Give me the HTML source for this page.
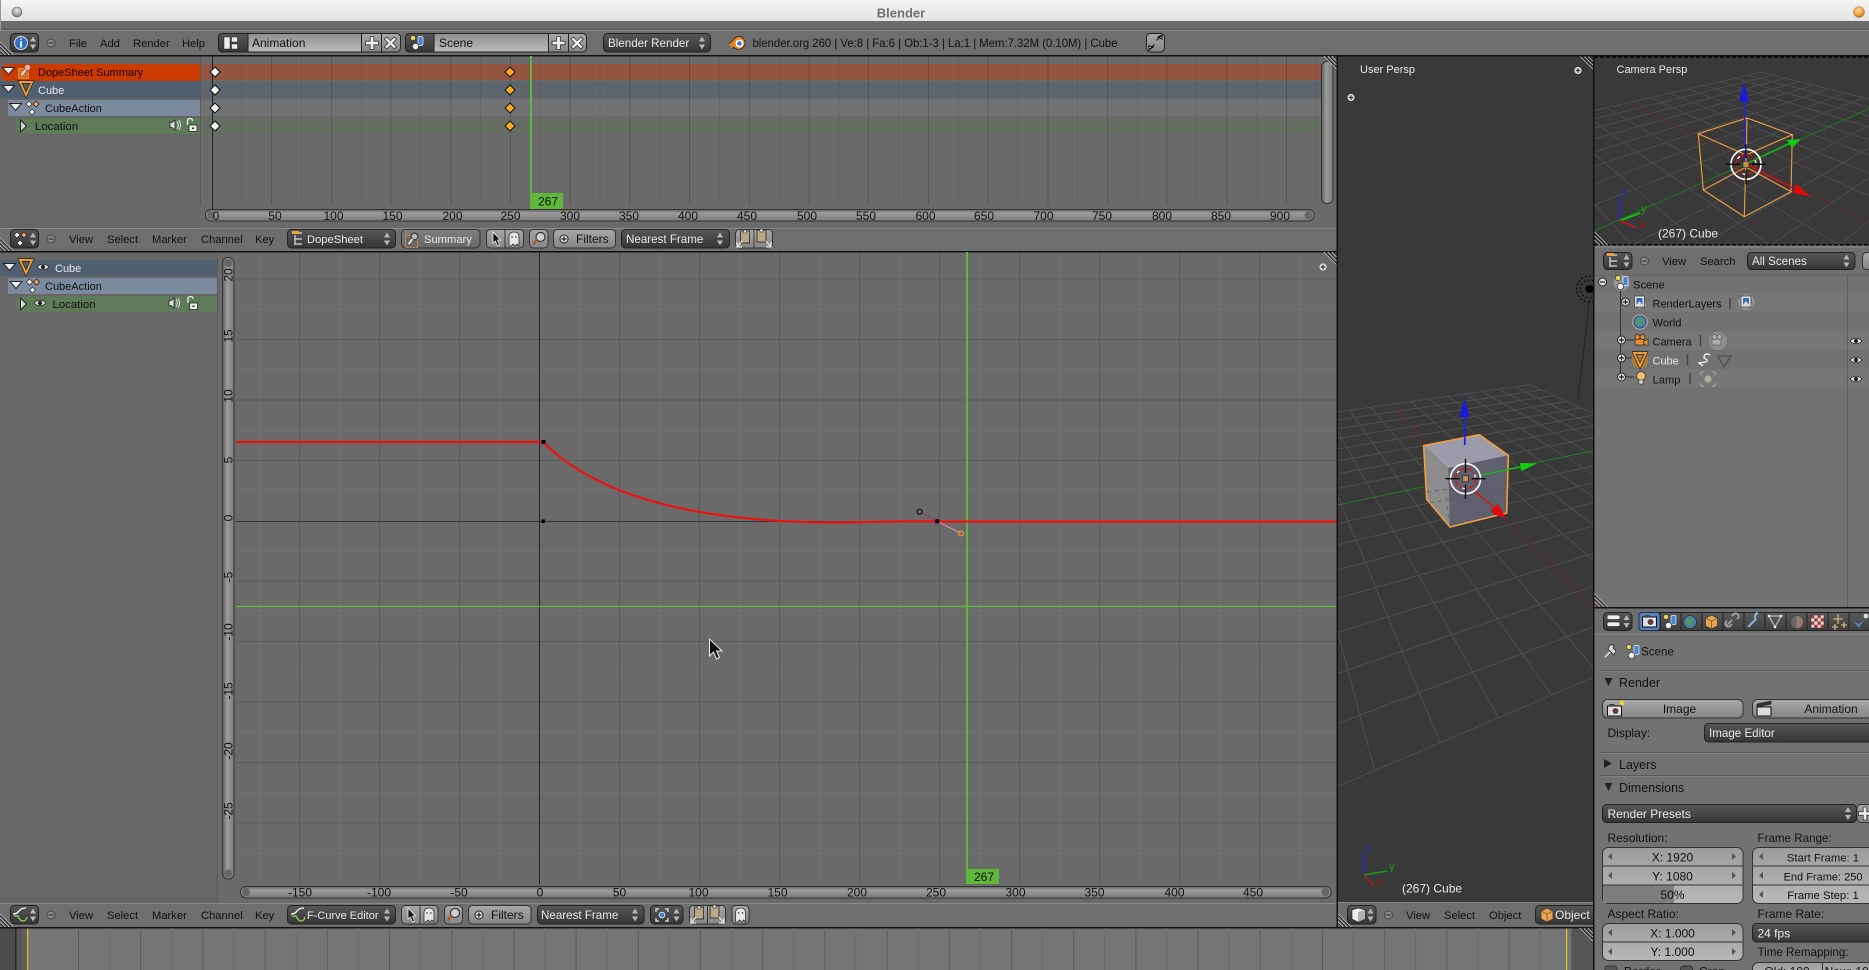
<!DOCTYPE html>
<html><head><meta charset="utf-8"><title>Blender</title>
<style>
html,body{margin:0;padding:0;background:#727272;width:1869px;height:970px;overflow:hidden}
svg{display:block}
text{font-family:"Liberation Sans",sans-serif;font-size:12px;fill:#111}
.w{fill:#e8e8e8}
.m{text-anchor:middle}
.h{font-size:11.2px}
.n{font-size:11.6px}
.c{shape-rendering:crispEdges}
</style></head><body>
<svg width="1869" height="970" viewBox="0 0 1869 970" xmlns="http://www.w3.org/2000/svg">
<defs>
<linearGradient id="gt" x1="0" y1="0" x2="0" y2="1"><stop offset="0" stop-color="#f4f4f3"/><stop offset="1" stop-color="#e3e3e3"/></linearGradient>
<linearGradient id="gd" x1="0" y1="0" x2="0" y2="1"><stop offset="0" stop-color="#575757"/><stop offset="1" stop-color="#353535"/></linearGradient>
<linearGradient id="gb" x1="0" y1="0" x2="0" y2="1"><stop offset="0" stop-color="#a8a8a8"/><stop offset="1" stop-color="#858585"/></linearGradient>
<linearGradient id="gsm" x1="0" y1="0" x2="0" y2="1"><stop offset="0" stop-color="#808080"/><stop offset="1" stop-color="#666"/></linearGradient>
<linearGradient id="gf" x1="0" y1="0" x2="0" y2="1"><stop offset="0" stop-color="#8f8f8f"/><stop offset="1" stop-color="#bcbcbc"/></linearGradient>
<linearGradient id="gn" x1="0" y1="0" x2="0" y2="1"><stop offset="0" stop-color="#9c9c9c"/><stop offset="1" stop-color="#b8b8b8"/></linearGradient>
<linearGradient id="gs" x1="0" y1="0" x2="0" y2="1"><stop offset="0" stop-color="#5e5e5e"/><stop offset=".3" stop-color="#9c9c9c"/><stop offset="1" stop-color="#7a7a7a"/></linearGradient>
<linearGradient id="gv" x1="0" y1="0" x2="1" y2="0"><stop offset="0" stop-color="#5e5e5e"/><stop offset=".4" stop-color="#9c9c9c"/><stop offset="1" stop-color="#7a7a7a"/></linearGradient>
<linearGradient id="gtab" x1="0" y1="0" x2="0" y2="1"><stop offset="0" stop-color="#5a5a5a"/><stop offset="1" stop-color="#3e3e3e"/></linearGradient>
<radialGradient id="gor" cx=".45" cy=".35" r=".7"><stop offset="0" stop-color="#fde0a0"/><stop offset=".6" stop-color="#f0a030"/><stop offset="1" stop-color="#a86010"/></radialGradient>
<radialGradient id="ggr" cx=".5" cy=".35" r=".7"><stop offset="0" stop-color="#e8e8e8"/><stop offset=".7" stop-color="#999"/><stop offset="1" stop-color="#555"/></radialGradient>
<pattern id="ptl" patternUnits="userSpaceOnUse" x="78" y="928" width="62.2" height="42"><rect x="0" width="1" height="42" fill="#5c5c5c"/><rect x="31" width="1" height="42" fill="#6a6a6a"/></pattern>

<g id="ud"><path d="M0-6.5L-3-1.5H3zM0 6.5L-3 1.5H3z" fill="#b8b8b8"/></g>
<g id="plus"><path d="M-1.8-6.5h3.6v4.7h4.7v3.6h-4.7v4.7h-3.6v-4.7h-4.7v-3.6h4.7z" fill="#eee" stroke="#333" stroke-width=".8"/></g>
<g id="xx"><g transform="rotate(45)"><path d="M-1.6-7h3.2v5.4h5.4v3.2h-5.4v5.4h-3.2v-5.4h-5.4v-3.2h5.4z" fill="#eee" stroke="#333" stroke-width=".8"/></g></g>
<g id="dw"><path d="M-6.5-3.5H5.5L-.5 3.5z" fill="#eee" stroke="#222"/></g>
<g id="rt"><path d="M-2.5-6V6L3.5 0z" fill="#d8d8d8" stroke="#222"/></g>
<g id="dmw"><path d="M0-5L5 0 0 5-5 0z" fill="#f2f2f2" stroke="#111"/></g>
<g id="dmo"><path d="M0-5L5 0 0 5-5 0z" fill="#f8ac20" stroke="#111"/></g>
<g id="act"><path d="M-6-6L-3-9 0-6-3-3zM1-6L4-9 7-6 4-3zM-3 2L0-1 3 2 0 5z" fill="#f2f2f2" stroke="#222" stroke-width=".7"/><path d="M1-6L4-9 7-6 4-3z" fill="#f0a060" stroke="#222" stroke-width=".7"/></g>
<g id="mesh"><path d="M-6-7H6L0 6z" fill="none" stroke="#222" stroke-width="3.4"/><path d="M-6-7H6L0 6z" fill="none" stroke="#f09a30" stroke-width="2"/></g>
<g id="eye"><path d="M-6 0Q0-5.5 6 0Q0 5.5-6 0z" fill="#eee" stroke="#222" stroke-width=".8"/><circle r="2.2" fill="#222"/></g>
<g id="spk"><path d="M-5-2.500h2L0-5V5L-3 2.500h-2z" fill="#ddd" stroke="#222" stroke-width=".8"/><path d="M2-4Q4.500 0 2 4M4-5Q7 0 4 5" fill="none" stroke="#ddd"/></g>
<g id="lock"><path d="M-5-1V-5Q-5-7.500-2.500-7.500T0-5" fill="none" stroke="#eee" stroke-width="1.300"/><rect x="-3.500" y="-1" width="8" height="6.500" fill="#eee" stroke="#222" stroke-width=".8"/><rect x="-.5" y="1.500" width="2" height="1.500" fill="#222"/></g>
<g id="minus"><circle r="4" fill="#8a8a8a" stroke="#444"/><path d="M-2.300 0H2.300" stroke="#333" stroke-width="1.200"/></g>
<g id="cplus"><circle r="4" fill="#ddd" stroke="#222"/><path d="M-2.500 0H2.500M0-2.500V2.500" stroke="#222" stroke-width="1.200"/></g>
<g id="cminus"><circle r="4" fill="#ddd" stroke="#222"/><path d="M-2.500 0H2.500" stroke="#222" stroke-width="1.200"/></g>
<g id="wplus"><circle r="3.600" fill="#ddd"/><path d="M-2.200 0H2.200M0-2.200V2.200" stroke="#333" stroke-width="1.200"/></g>
<g id="scene"><circle cx="-5" cy="-5" r="2.600" fill="#e8d858" stroke="#222" stroke-width=".6"/><rect x="0" y="-6.500" width="5" height="9" rx="1.500" fill="#4a84d8" stroke="#eee" stroke-width=".7"/><circle cx="-2.500" cy="3.500" r="3.200" fill="#eee" stroke="#222" stroke-width=".7"/></g>
<g id="sumi"><rect x="-6.500" y="-2.500" width="10" height="10" fill="#c87038" stroke="#f09a30" stroke-dasharray="2 1"/><circle cx="2.500" cy="-3.500" r="3.400" fill="#d8b8a0" stroke="#c03020" stroke-width="1.200"/><path d="M.5-1L-3.500 4" stroke="#eee" stroke-width="1.600"/></g>
<g id="sumb"><rect x="-6.500" y="-4.500" width="12" height="12" fill="#6a6a6a" stroke="#f09a30" stroke-dasharray="2 1"/><circle cx="2.500" cy="-3.500" r="3.400" fill="#bbb" stroke="#333" stroke-width="1.200"/><path d="M.5-1L-3.500 4" stroke="#eee" stroke-width="1.600"/></g>
<g id="grph"><path d="M-7-1Q-3-1-1-4T6-7" fill="none" stroke="#fff" stroke-width="1.300"/><path d="M-6 1H-2Q0 6 3 6T7 2" fill="none" stroke="#7ecf4a" stroke-width="1.500"/></g>
<g id="outl"><path d="M-6-6H3M-4-4V6M-4 0H3M-4 5H3" stroke="#ddd" stroke-width="1.200" fill="none"/><rect x="-7" y="-8" width="7" height="3" fill="#f0a040"/></g>
<g id="ptr"><path d="M-3-7L-3 4-.5 2 1.500 7 3.500 6 1.500 1 4.500 1z" fill="#111" stroke="#eee" stroke-width=".8"/></g>
<g id="ghost"><path d="M-5 7V-2Q-5-7 0-7T5-2V7L3 5 1 7-1 5-3 7z" fill="#e6e6e6" stroke="#333" stroke-width=".8"/><circle cx="-2" cy="-2" r=".9" fill="#555"/><circle cx="2" cy="-2" r=".9" fill="#555"/></g>
<g id="mag"><circle cx="1.500" cy="-2" r="4.500" fill="#d0d0d0" stroke="#333" stroke-width="1.200"/><path d="M-2-.0L-6 6" stroke="#a85c24" stroke-width="2.200"/></g>
<g id="clip"><rect x="-5" y="-7" width="9" height="12" fill="#b8a888" stroke="#222" stroke-width=".8"/><rect x="-2" y="-8" width="3" height="3" fill="#ddd" stroke="#222" stroke-width=".5"/></g>
<g id="ccube"><path d="M0-7L6-4V4L0 7-6 4V-4z" fill="#e8a450" stroke="#333" stroke-width=".7"/><path d="M-6-4L0-1 6-4M0-1V7" fill="none" stroke="#8c5a20" stroke-width=".8"/></g>
<g id="cam"><rect x="-7" y="-4" width="14" height="10" fill="#ddd" stroke="#111"/><circle cx="1" cy="1" r="3.500" fill="#444" stroke="#eee"/><circle cx="1" cy="1" r="1.300" fill="#b02020"/><rect x="-5" y="-6" width="5" height="2" fill="#444"/></g>
<g id="rlay"><path d="M5-3L7 5-2 7" fill="#bbb" stroke="#666" stroke-width=".6"/><rect x="-5" y="-6" width="10" height="11" fill="#ddd" stroke="#333" stroke-width=".7"/><rect x="-3" y="-4" width="6" height="7" fill="#3a6ab8"/><path d="M-3 3L0-1 3 3z" fill="#ddd"/></g>
<g id="hb"><path d="M0 0L13 13M0 4L9 13M0 8L5 13" stroke="#bbb" fill="none"/><path d="M0 1.200L11.800 13M0 5.200L7.800 13M0 9.200L3.800 13" stroke="#222" fill="none"/></g>
<g id="ht"><path d="M0 0L13 13M4 0L13 9M8 0L13 5" stroke="#bbb" fill="none"/><path d="M1.200 0L13 11.800M5.200 0L13 7.800M9.200 0L13 3.800" stroke="#222" fill="none"/></g>
<g id="cur"><circle r="15" fill="none" stroke="#fff" stroke-width="1.600"/><circle r="10" fill="none" stroke="#e01010" stroke-width="1.400" stroke-dasharray="5 3"/><circle r="10" fill="none" stroke="#fff" stroke-width="1.400" stroke-dasharray="3 18" stroke-dashoffset="5"/><path d="M-20 0H-6M6 0H20M0-20V-6M0 6V20" stroke="#000" stroke-width="1.300"/><rect x="-3" y="-3" width="6" height="6" fill="#c89050" stroke="#222" stroke-width=".7"/></g>
</defs>

<rect width="1869" height="970" fill="#6e6e6e"/>

<!-- window title bar -->
<rect width="1869" height="21" fill="url(#gt)"/>
<circle cx="17" cy="12" r="5" fill="url(#ggr)" stroke="#666" stroke-width=".6"/>
<circle cx="1859" cy="12" r="5.500" fill="url(#gor)" stroke="#955" stroke-width=".4"/>
<text x="901" y="17.500" class="m" style="font-weight:700;font-size:13px;fill:#71706c">Blender</text>
<rect y="21" width="1869" height="8" fill="#6c6c6c"/>
<rect y="28.500" width="1869" height="1.200" fill="#585858"/>
<rect y="30" width="1869" height="1" fill="#8a8a8a"/>
<rect x="0" y="0" width="1" height="970" fill="#9a9a9a"/>

<!-- info header -->
<rect y="31" width="1869" height="24" fill="#6e6e6e"/>
<use href="#hb" x="0" y="42"/>
<rect x="10.500" y="33.500" width="28" height="18.500" rx="4" fill="url(#gd)" stroke="#222"/>
<circle cx="21" cy="43" r="6.500" fill="#2f6fc8" stroke="#ddd"/><text x="21" y="47.500" class="m w" style="font-weight:700;font-size:12px;fill:#fff">i</text>
<use href="#ud" x="33" y="43"/>
<use href="#minus" x="51" y="43"/>
<text x="69" y="47" class="h">File</text><text x="100" y="47" class="h">Add</text><text x="133" y="47" class="h">Render</text><text x="182" y="47" class="h">Help</text>
<rect x="218.500" y="33.500" width="167" height="18.500" rx="4" fill="url(#gf)" stroke="#222"/>
<path d="M248 33.500H222.500a4 4 0 0 0-4 4V48a4 4 0 0 0 4 4H248z" fill="url(#gd)" stroke="#222"/>
<rect x="224" y="37" width="6" height="12" fill="#eee" stroke="#222" stroke-width=".5"/><rect x="231.500" y="37" width="6" height="5" fill="#eee" stroke="#222" stroke-width=".5"/><rect x="231.500" y="44" width="6" height="5" fill="#eee" stroke="#222" stroke-width=".5"/>
<text x="252" y="47">Animation</text>
<path d="M361.500 33.500H396.500a4 4 0 0 1 4 4V48a4 4 0 0 1-4 4H361.500z" fill="url(#gb)" stroke="#222"/><path d="M381.500 33.500V52" stroke="#222"/>
<use href="#plus" x="372" y="43"/><use href="#xx" x="390.500" y="43"/>
<rect x="405.500" y="33.500" width="167" height="18.500" rx="4" fill="url(#gf)" stroke="#222"/>
<path d="M434 33.500H409.500a4 4 0 0 0-4 4V48a4 4 0 0 0 4 4H434z" fill="url(#gd)" stroke="#222"/>
<use href="#scene" x="418" y="43"/>
<text x="439" y="47">Scene</text>
<path d="M548.500 33.500H582.500a4 4 0 0 1 4 4V48a4 4 0 0 1-4 4H548.500z" fill="url(#gb)" stroke="#222"/><path d="M568.500 33.500V52" stroke="#222"/>
<use href="#plus" x="558.500" y="43"/><use href="#xx" x="577" y="43"/>
<rect x="603.500" y="33.500" width="107" height="18.500" rx="4" fill="url(#gd)" stroke="#222"/>
<text x="608" y="47" class="w n">Blender Render</text><use href="#ud" x="702" y="43"/>
<g transform="translate(737 43)"><path d="M-8 1L0-6.500H3A6.500 6.500 0 1 1-3.500 4L-5 6" fill="#ea8220" stroke="#222" stroke-width=".7"/><circle cx="2.500" cy="0.500" r="4" fill="#f2f2f2"/><circle cx="2.500" cy="0.500" r="2.200" fill="#2f6fc8"/></g>
<text x="752.500" y="47" textLength="365" lengthAdjust="spacingAndGlyphs">blender.org 260 | Ve:8 | Fa:6 | Ob:1-3 | La:1 | Mem:7.32M (0.10M) | Cube</text>
<rect x="1146.500" y="33.500" width="18" height="18.500" rx="4" fill="url(#gb)" stroke="#222"/>
<path d="M1153 47L1149 50V46ZM1149 50L1153 46M1158 37L1162 35V39ZM1161.500 35.500L1156.500 40.500M1149.500 49.500L1154.500 44.500" stroke="#111" fill="#fff" stroke-width="1.100"/>
<rect y="55" width="1869" height="1.600" fill="#111"/>

<!-- dopesheet -->
<rect y="56.600" width="200" height="172" fill="#666"/>
<rect x="200" y="56.600" width="1137" height="172" fill="#6a6a6a"/>
<rect x="200" y="64" width="1121" height="16" fill="#915540"/>
<rect x="200" y="81" width="1121" height="17" fill="#5f656c"/>
<rect x="200" y="100" width="1121" height="16" fill="#707274"/>
<rect x="200" y="118" width="1121" height="16" fill="#666d62"/>
<path d="M7 64H200V81H7Q1 81 1 72.500T7 64z" fill="#cb3a00"/>
<rect x="0" y="81" width="200" height="17" fill="#4f5f70"/>
<rect x="8" y="100" width="192" height="16" fill="#7b8b9d"/>
<path d="M23 118H200V134H23Q15 134 15 126T23 118z" fill="#5e7a58"/>
<path d="M200.500 56.500V205" stroke="#5a5a5a"/>
<path class="c" d="M271.700 56V205M331.400 56V205M391.100 56V205M450.800 56V205M510.500 56V205M570.200 56V205M629.900 56V205M689.600 56V205M749.300 56V205M809 56V205M868.700 56V205M928.400 56V205M988.100 56V205M1047.800 56V205M1107.500 56V205M1167.200 56V205M1226.900 56V205M1286.600 56V205" stroke="#000" stroke-opacity=".18" fill="none"/>
<path class="c" d="M241.900 56V205M301.600 56V205M361.300 56V205M421 56V205M480.700 56V205M540.400 56V205M600.100 56V205M659.800 56V205M719.500 56V205M779.200 56V205M838.900 56V205M898.600 56V205M958.300 56V205M1018 56V205M1077.700 56V205M1137.400 56V205M1197.100 56V205M1256.800 56V205M1316.500 56V205" stroke="#000" stroke-opacity=".07" fill="none"/>
<path d="M212.500 56V209" stroke="#222"/>
<use href="#dmw" x="215" y="72"/><use href="#dmo" x="510" y="72"/>
<use href="#dmw" x="215" y="90"/><use href="#dmo" x="510" y="90"/>
<use href="#dmw" x="215" y="108"/><use href="#dmo" x="510" y="108"/>
<use href="#dmw" x="215" y="126"/><use href="#dmo" x="510" y="126"/>
<use href="#dw" x="9" y="71"/><use href="#sumi" x="25" y="71"/>
<text x="38" y="76" style="fill:#200;font-size:11px">DopeSheet Summary</text>
<use href="#dw" x="9" y="89"/><use href="#mesh" x="26" y="89"/>
<text x="38" y="94" class="w" style="font-size:11px">Cube</text>
<use href="#dw" x="16" y="107"/><use href="#act" x="32" y="110"/>
<text x="45" y="112" style="font-size:11px">CubeAction</text>
<use href="#rt" x="23" y="126"/>
<text x="35" y="130" style="font-size:11.4px">Location</text>
<use href="#spk" x="175" y="125"/><use href="#lock" x="192.500" y="126"/>
<rect x="530" y="56" width="2" height="153" fill="#5fb83a"/>
<rect x="531" y="193" width="32" height="16" fill="#5fb83a"/>
<text x="548" y="205.500" class="m">267</text>
<rect x="205.500" y="209.500" width="1108.500" height="11.500" rx="5.500" fill="url(#gs)" stroke="#333"/>
<circle cx="211" cy="215.300" r="4" fill="#666"/><circle cx="1308.500" cy="215.300" r="4" fill="#666"/>
<text x="216" y="220" class="m">0</text><text x="275" y="220" class="m">50</text><text x="333.500" y="220" class="m">100</text><text x="392.500" y="220" class="m">150</text><text x="452.500" y="220" class="m">200</text><text x="510.500" y="220" class="m">250</text><text x="570" y="220" class="m">300</text><text x="629" y="220" class="m">350</text><text x="688" y="220" class="m">400</text><text x="747" y="220" class="m">450</text><text x="807" y="220" class="m">500</text><text x="866" y="220" class="m">550</text><text x="925.500" y="220" class="m">600</text><text x="984" y="220" class="m">650</text><text x="1043.500" y="220" class="m">700</text><text x="1102" y="220" class="m">750</text><text x="1162" y="220" class="m">800</text><text x="1221" y="220" class="m">850</text><text x="1280" y="220" class="m">900</text>
<rect x="1321.500" y="61.500" width="11.500" height="142" rx="5.500" fill="url(#gv)" stroke="#333"/>
<use href="#ht" x="1324" y="56"/>

<!-- dopesheet header -->
<rect y="228" width="1337" height="23" fill="#6e6e6e"/>
<rect y="228" width="1337" height="1" fill="#8a8a8a"/>
<use href="#hb" x="0" y="238"/>
<rect x="10.500" y="229.500" width="28" height="18.500" rx="4" fill="url(#gd)" stroke="#222"/>
<use href="#act" x="20" y="241"/><use href="#ud" x="33" y="239"/>
<use href="#minus" x="51" y="239"/>
<text x="69" y="243" class="h">View</text><text x="107" y="243" class="h">Select</text><text x="152" y="243" class="h">Marker</text><text x="201" y="243" class="h">Channel</text><text x="255" y="243" class="h">Key</text>
<rect x="287.500" y="229.500" width="108" height="18.500" rx="4" fill="url(#gd)" stroke="#222"/>
<use href="#outl" x="299" y="239"/>
<text x="307" y="243" class="w h">DopeSheet</text><use href="#ud" x="387" y="239"/>
<rect x="401.500" y="229.500" width="78.500" height="18.500" rx="4" fill="url(#gsm)" stroke="#333"/>
<use href="#sumb" x="412" y="240"/><text x="424" y="243" class="w h">Summary</text>
<rect x="486.500" y="229.500" width="37" height="18.500" rx="4" fill="url(#gb)" stroke="#333"/><path d="M505 229.500V248" stroke="#333"/>
<use href="#ptr" x="496" y="239"/><use href="#ghost" x="514" y="239"/>
<rect x="529.500" y="229.500" width="18.500" height="18.500" rx="4" fill="url(#gb)" stroke="#333"/><use href="#mag" x="539" y="239"/>
<rect x="553.500" y="229.500" width="62" height="18.500" rx="4" fill="url(#gb)" stroke="#333"/>
<use href="#cplus" x="564" y="239"/><text x="576" y="243">Filters</text>
<rect x="621.500" y="229.500" width="108" height="18.500" rx="4" fill="url(#gd)" stroke="#222"/>
<text x="626" y="243" class="w n">Nearest Frame</text><use href="#ud" x="720" y="239"/>
<rect x="735.500" y="229.500" width="37" height="18.500" rx="4" fill="url(#gb)" stroke="#333"/><path d="M754 229.500V248" stroke="#333"/>
<use href="#clip" x="745.500" y="238"/><path d="M737 247L742 241M737 242V247H742" stroke="#eee" fill="none" stroke-width="1.200"/>
<use href="#clip" x="762" y="237"/><path d="M771 247L766 241M771 242V247H766" stroke="#eee" fill="none" stroke-width="1.200"/>
<rect y="251" width="1337" height="1.500" fill="#111"/>

<!-- graph editor -->
<rect y="252.500" width="217" height="650.500" fill="#666"/>
<rect x="217" y="252.500" width="1120" height="650.500" fill="#6a6a6a"/>
<path d="M217.500 252V903" stroke="#5a5a5a"/>
<path class="c" d="M236 279H1337M236 339.500H1337M236 400H1337M236 460.500H1337M236 581H1337M236 641.500H1337M236 702H1337M236 762.500H1337M236 823H1337M299.500 252V884M379.500 252V884M459.500 252V884M619.500 252V884M699.500 252V884M779.500 252V884M859.500 252V884M939.500 252V884M1019.500 252V884M1099.500 252V884M1179.500 252V884M1259.500 252V884" stroke="#000" stroke-opacity=".16" fill="none"/>
<path class="c" d="M236 309H1337M236 370H1337M236 430H1337M236 490H1337M236 551H1337M236 611H1337M236 672H1337M236 732H1337M236 793H1337M236 853H1337M259.500 252V884M339.500 252V884M419.500 252V884M499.500 252V884M579.500 252V884M659.500 252V884M739.500 252V884M819.500 252V884M899.500 252V884M979.500 252V884M1059.500 252V884M1139.500 252V884M1219.500 252V884M1299.500 252V884" stroke="#fff" stroke-opacity=".05" fill="none"/>
<path d="M539.500 252V884" stroke="#222"/>
<path d="M236 521.500H1337" stroke="#22383b"/>
<path d="M236 606.500H1337" stroke="#5fb83a" stroke-width="1.300"/>
<rect x="966" y="252" width="2" height="632" fill="#5fb83a"/>
<path d="M236 442H543.400C590 490 680 522 834 522.500C870 522.500 900 520.500 937 521.500H1337" fill="none" stroke="#f01010" stroke-width="2.200"/>
<rect x="541.500" y="440" width="4" height="4" fill="#000"/><rect x="541.500" y="519.500" width="3.500" height="3.500" fill="#000"/>
<path d="M919.700 511.700L937.300 521.300" stroke="#8a3a70"/>
<path d="M937.300 521.300L961 533.300" stroke="#f090b0"/>
<rect x="935.300" y="519.300" width="4" height="4" fill="#000"/>
<circle cx="919.700" cy="511.700" r="2.500" fill="none" stroke="#111" stroke-width="1.200"/>
<circle cx="961" cy="533.300" r="2.500" fill="none" stroke="#f09020" stroke-width="1.200"/>
<use href="#wplus" x="1323" y="267"/>
<use href="#ht" x="1324" y="252"/>
<rect x="0" y="260" width="217" height="16" fill="#4f5f70"/>
<rect x="8" y="278" width="209" height="16" fill="#7b8b9d"/>
<path d="M23 296H217V312H23Q15 312 15 304T23 296z" fill="#5e7a58"/>
<use href="#dw" x="10" y="267"/><use href="#mesh" x="26" y="267"/><use href="#eye" x="43" y="267"/>
<text x="55" y="272" class="w" style="font-size:11px">Cube</text>
<use href="#dw" x="16.500" y="285"/><use href="#act" x="32.500" y="288"/>
<text x="45" y="290" style="font-size:11px">CubeAction</text>
<use href="#rt" x="23" y="304"/><use href="#eye" x="40" y="303"/>
<text x="52.500" y="308" style="font-size:11.400px">Location</text>
<use href="#spk" x="174" y="303"/><use href="#lock" x="193" y="304"/>
<rect x="222.500" y="257.500" width="11.500" height="621.500" rx="5.500" fill="url(#gv)" stroke="#333"/>
<circle cx="228.300" cy="263" r="4" fill="#666"/><circle cx="228.300" cy="873.500" r="4" fill="#666"/>
<text transform="translate(232.500 275) rotate(-90)" class="m">20</text>
<text transform="translate(232.500 336) rotate(-90)" class="m">15</text>
<text transform="translate(232.500 396) rotate(-90)" class="m">10</text>
<text transform="translate(232.500 460) rotate(-90)" class="m">5</text>
<text transform="translate(232.500 518) rotate(-90)" class="m">0</text>
<text transform="translate(232.500 577) rotate(-90)" class="m">-5</text>
<text transform="translate(232.500 632) rotate(-90)" class="m">-10</text>
<text transform="translate(232.500 691) rotate(-90)" class="m">-15</text>
<text transform="translate(232.500 751) rotate(-90)" class="m">-20</text>
<text transform="translate(232.500 811) rotate(-90)" class="m">-25</text>
<rect x="966" y="869" width="33" height="15" fill="#5fb83a"/>
<text x="984" y="881" class="m">267</text>
<rect x="240.500" y="886.500" width="1090.500" height="11.500" rx="5.500" fill="url(#gs)" stroke="#333"/>
<circle cx="246" cy="892" r="4" fill="#666"/><circle cx="1325.500" cy="892" r="4" fill="#666"/>
<text x="300" y="896.500" class="m">-150</text><text x="379" y="896.500" class="m">-100</text><text x="459" y="896.500" class="m">-50</text><text x="540" y="896.500" class="m">0</text><text x="619.500" y="896.500" class="m">50</text><text x="698.500" y="896.500" class="m">100</text><text x="777.500" y="896.500" class="m">150</text><text x="857" y="896.500" class="m">200</text><text x="936" y="896.500" class="m">250</text><text x="1015.500" y="896.500" class="m">300</text><text x="1094.500" y="896.500" class="m">350</text><text x="1174.500" y="896.500" class="m">400</text><text x="1253" y="896.500" class="m">450</text>

<!-- graph header -->
<rect y="903" width="1337" height="24" fill="#6e6e6e"/>
<rect y="903" width="1337" height="1" fill="#8a8a8a"/>
<use href="#hb" x="0" y="914"/>
<rect x="10.500" y="905.500" width="28" height="18.500" rx="4" fill="url(#gd)" stroke="#222"/>
<use href="#grph" x="20" y="915"/><use href="#ud" x="33" y="915"/>
<use href="#minus" x="51" y="915"/>
<text x="69" y="919" class="h">View</text><text x="107" y="919" class="h">Select</text><text x="152" y="919" class="h">Marker</text><text x="201" y="919" class="h">Channel</text><text x="255" y="919" class="h">Key</text>
<rect x="287.500" y="905.500" width="108" height="18.500" rx="4" fill="url(#gd)" stroke="#222"/>
<use href="#grph" x="298" y="915"/><text x="307" y="919" class="w" style="font-size:11px">F-Curve Editor</text><use href="#ud" x="387" y="915"/>
<rect x="401.500" y="905.500" width="36.500" height="18.500" rx="4" fill="url(#gb)" stroke="#333"/><path d="M420 905.500V924" stroke="#333"/>
<use href="#ptr" x="411" y="915"/><use href="#ghost" x="429" y="915"/>
<rect x="444.500" y="905.500" width="18" height="18.500" rx="4" fill="url(#gb)" stroke="#333"/><use href="#mag" x="453.500" y="915"/>
<rect x="468.500" y="905.500" width="62.500" height="18.500" rx="4" fill="url(#gb)" stroke="#333"/>
<use href="#cplus" x="479" y="915"/><text x="491" y="919">Filters</text>
<rect x="537.500" y="905.500" width="106.500" height="18.500" rx="4" fill="url(#gd)" stroke="#222"/>
<text x="541" y="919" class="w n">Nearest Frame</text><use href="#ud" x="635" y="915"/>
<rect x="650.500" y="905.500" width="32.500" height="18.500" rx="4" fill="url(#gd)" stroke="#222"/>
<path d="M656 912V909H659M665 909H668V912M668 918V921H665M659 921H656V918" stroke="#eee" fill="none" stroke-width="1.200"/><circle cx="662" cy="915" r="2.800" fill="#3a78d8" stroke="#ddd"/><use href="#ud" x="676.500" y="915"/>
<rect x="689.500" y="905.500" width="36" height="18.500" rx="4" fill="url(#gb)" stroke="#333"/><path d="M707.500 905.500V924" stroke="#333"/>
<use href="#clip" x="699.500" y="914"/><path d="M691 923L696 917M691 918V923H696" stroke="#eee" fill="none" stroke-width="1.200"/>
<use href="#clip" x="715" y="913"/><path d="M724 923L719 917M724 918V923H719" stroke="#eee" fill="none" stroke-width="1.200"/>
<rect x="732" y="905.500" width="17" height="18.500" rx="4" fill="url(#gb)" stroke="#333"/><use href="#ghost" x="740.500" y="915"/>
<rect y="927" width="1593" height="1.500" fill="#111"/>

<!-- timeline -->
<rect y="928.500" width="1593" height="42" fill="#757575"/>
<rect x="78" y="928" width="1494" height="42" fill="url(#ptl)"/>
<rect y="928.500" width="15" height="42" fill="#4c4c4c"/>
<rect x="15" y="928.500" width="1.500" height="42" fill="#282828"/>
<rect x="16.500" y="928.500" width="5.500" height="42" fill="#555"/>
<rect x="22" y="928.500" width="5" height="42" fill="#5e5e5e"/>
<rect x="27" y="928.500" width="1.200" height="42" fill="#d8c818"/>
<rect x="1572" y="928.500" width="21" height="42" fill="#555"/>
<rect x="1566" y="928.500" width="1.200" height="42" fill="#d8c818"/>
<use href="#ht" x="1580" y="928"/>

<!-- user persp -->
<rect x="1336.500" y="55" width="1.500" height="872" fill="#111"/>
<svg x="1338" y="56.500" width="255" height="846" viewBox="1338 56.500 255 846">
<rect x="1338" y="56" width="255" height="846" fill="#393939"/>
<g stroke="#4f4f4f" fill="none">
<path d="M1338 411.900L1530.100 384.700M1338 419.900L1541.600 390M1338 428.700L1553.700 395.500M1338 438.400L1566.800 401.500M1338 449L1580.800 407.900M1338 460.800L1593 415.300M1338 473.800L1593 425.800M1338 488.400L1593 437.500M1338 523.500L1593 465.800M1338 544.800L1593 483M1338 569.500L1593 502.800M1338 598.300L1593 526M1338 632.300L1593 553.400M1338 673.300L1593 586.400M1338 723.400L1593 626.800M1338 786.200L1593 677.400"/>
<path d="M1530.100 384.700L1891 550M1514.700 386.900L1867.700 560M1498.700 389.100L1842 571M1482.300 391.400L1815 582.600M1465.200 393.800L1786 595M1447.600 396.300L1754.500 608.500M1429.400 398.900L1720.400 623M1410.500 401.600L1683.500 638.700M1370.600 407.200L1599.600 674.600M1349.500 410.200L1551.500 695.100M1327.700 413.300L1498.500 717.700M1304.900 416.500L1440 742.800M1281.200 419.800L1374.600 770.600"/>
</g>
<path d="M1390.900 404.300L1643.400 655.900" stroke="#5e2c2c"/>
<path d="M1338 504.900L1593 450.800" stroke="#267a26"/>
<path d="M1589.500 300L1578 400" stroke="#222"/>
<circle cx="1589.500" cy="289" r="4" fill="#000"/><circle cx="1589.500" cy="289" r="9" fill="none" stroke="#000" stroke-dasharray="2 2"/><circle cx="1589.500" cy="289" r="13" fill="none" stroke="#000" stroke-dasharray="2 2"/>
<!-- cube -->
<path d="M1423.700 445.700L1479.300 434.700L1508.300 455.300L1448.300 468.300z" fill="#9b9baa"/>
<path d="M1448.300 468.300L1508.300 455.300L1506.700 513L1450 527z" fill="#5f5f6e"/>
<path d="M1423.700 445.700L1448.300 468.300L1450 527L1426.700 499.300z" fill="#8c8c8c"/>
<path d="M1423.700 445.700L1479.300 434.700L1508.300 455.300L1506.700 513L1450 527L1426.700 499.300z" fill="none" stroke="#f0a040" stroke-width="1.600"/>
<path d="M1427 492L1463 487M1430 503L1506 488M1446 498L1450 527" stroke="#555" stroke-dasharray="4 4" fill="none" opacity=".7"/>
<path d="M1464.800 410V445" stroke="#2222e8" stroke-width="1.800"/>
<path d="M1464.500 398L1459.500 417H1469.500z" fill="#1a1ae0"/>
<path d="M1480 475.300L1520 467.300" stroke="#10c010" stroke-width="1.300"/>
<path d="M1520 463L1521 471L1537 463.500z" fill="#10d010"/>
<path d="M1473 490L1497 510" stroke="#e01010" stroke-width="1.300"/>
<path d="M1498 504L1491 510L1495 515L1506 518z" fill="#e00808"/>
<use href="#cur" x="1465.500" y="478.700"/>
<text x="1360" y="73" class="w" style="font-size:11px">User Persp</text>
<use href="#wplus" x="1578" y="70.500"/><use href="#wplus" x="1351" y="97.500"/>
<path d="M1364 875V853" stroke="#2a2ad0" stroke-width="1.600"/><path d="M1364 875L1387 871" stroke="#10a010" stroke-width="1.600"/><path d="M1364 875L1374 886" stroke="#d01010" stroke-width="1.300"/>
<text x="1365" y="852" style="font-size:11px;fill:#2a2ac0">z</text><text x="1389" y="870" style="font-size:11px;fill:#10a010">y</text><text x="1377" y="885" style="font-size:11px;fill:#b01010">x</text>
<text x="1402" y="892.500" class="w">(267) Cube</text>
<use href="#ht" x="1580" y="56"/>
</svg>

<!-- 3D header -->
<rect x="1338" y="902" width="255" height="25" fill="#6e6e6e"/>
<rect x="1338" y="902" width="255" height="1" fill="#8a8a8a"/>
<use href="#hb" x="1338" y="914"/>
<rect x="1347.500" y="905.500" width="28.500" height="18.500" rx="4" fill="url(#gd)" stroke="#222"/>
<path d="M1358 908L1365 910V919L1358 922L1352 919V910z" fill="#eee" stroke="#222" stroke-width=".6"/><path d="M1358 912V922L1365 919V910z" fill="#b0b0b0"/><use href="#ud" x="1370.500" y="915"/>
<use href="#minus" x="1388.500" y="915"/>
<text x="1406" y="919" class="h">View</text><text x="1444" y="919" class="h">Select</text><text x="1489" y="919" class="h">Object</text>
<svg x="1535" y="904" width="58" height="22"><rect x=".5" y="1.500" width="70" height="18.500" rx="4" fill="url(#gd)" stroke="#222"/><use href="#ccube" x="12" y="11"/><text x="20" y="15" class="w">Object Mode</text></svg>

<rect x="1593" y="55" width="1.500" height="915" fill="#111"/>

<!-- camera persp -->
<svg x="1594.500" y="56.500" width="275" height="189" viewBox="1594.500 56.500 275 189">
<rect x="1594" y="56" width="275" height="190" fill="#393939"/>
<g stroke="#4d4d4d" fill="none">
<path d="M1594 110.600L1760.800 72.300M1594 118.900L1772.600 75.200M1594 128.300L1785.300 78.300M1594 139.100L1799 81.700M1594 151.700L1813.200 85.200M1594 166.400L1828.600 89M1594 183.900L1845.700 93.200M1594 205L1863.600 97.600M1632 245L1869 125.600M1701.400 245L1869 147.600M1770.600 245L1869 177.500M1839.900 245L1869 220.600"/>
<path d="M1760.800 72.300L1869 98.900M1748 75.200L1869 107M1734.600 78.300L1869 116.300M1720.300 81.700L1869 127.100M1704.500 85.200L1869 139.900M1687.800 89L1869 155M1670 93.200L1869 173.300M1650.600 97.600L1869 196M1606.800 107.700L1839.300 245M1594 121.900L1769.900 245M1594 153.500L1700.700 245M1594 203.500L1631.400 245"/>
</g>
<path d="M1629.700 102.500L1869 224.800" stroke="#5e2c2c"/>
<path d="M1594 231.100L1869 108.800" stroke="#1f7a1f"/>
<path d="M1698.300 133.700L1747 118L1792.300 134.700L1746 155zM1703.300 190L1744.300 216.700L1791 191.700L1746 167zM1698.300 133.700L1703.300 190M1792.300 134.700L1791 191.700M1746 155L1744.300 216.700M1747 118L1746 167" fill="none" stroke="#f0a040" stroke-width="1.100"/>
<path d="M1744.500 100V165" stroke="#2222e8" stroke-width="1.300"/>
<path d="M1744 82.300L1739 101.700H1749z" fill="#1a1ae0"/>
<path d="M1746 164L1790 143" stroke="#10c010" stroke-width="1.300"/>
<path d="M1800.700 139.300L1787 140L1792 148z" fill="#10d010"/>
<path d="M1746 164L1793 188" stroke="#e01010" stroke-width="1.300"/>
<path d="M1811 196.700L1796 184L1793 193z" fill="#e00808"/>
<use href="#cur" x="1746" y="164.300"/>
<text x="1616.500" y="73" class="w" style="font-size:11px">Camera Persp</text>
<path d="M1620 220.700V198" stroke="#2a2ad0" stroke-width="1.600"/><path d="M1620 220.700L1640 213" stroke="#10c010" stroke-width="2"/><path d="M1620 220.700L1636.700 228" stroke="#d01010" stroke-width="1.500"/>
<text x="1621" y="197" style="font-size:11px;fill:#2a2ac0">z</text><text x="1641" y="212" style="font-size:11px;fill:#20a020">y</text><text x="1640" y="228" style="font-size:11px;fill:#b01010">x</text>
<text x="1658" y="237.500" class="w">(267) Cube</text>
<path d="M1594 57H1869M1594 244.800H1869" stroke="#000" stroke-width="1.400" stroke-dasharray="4 2"/>
<use href="#hb" x="1594.500" y="232"/>
</svg>

<!-- outliner -->
<rect x="1594.500" y="245.500" width="275" height="30" fill="#6e6e6e"/>
<rect x="1594.500" y="246.500" width="275" height="1" fill="#8a8a8a"/>
<rect x="1603.500" y="252.500" width="28.500" height="17" rx="4" fill="url(#gd)" stroke="#222"/>
<use href="#outl" x="1614" y="261"/><use href="#ud" x="1626.500" y="261"/>
<use href="#minus" x="1644.500" y="261"/>
<text x="1662" y="265" class="h">View</text><text x="1700" y="265" class="h">Search</text>
<rect x="1747.500" y="252.500" width="107.500" height="17" rx="4" fill="url(#gd)" stroke="#222"/>
<text x="1752" y="265" class="w n">All Scenes</text><use href="#ud" x="1846.500" y="261"/>
<rect x="1862.500" y="252.500" width="12" height="17" rx="4" fill="url(#gb)" stroke="#333"/>
<rect x="1594.500" y="275" width="275" height="332" fill="#727272"/>
<rect x="1594.500" y="293" width="275" height="19" fill="#777"/>
<rect x="1594.500" y="331" width="275" height="19" fill="#777"/>
<rect x="1594.500" y="369" width="275" height="19" fill="#777"/>
<rect x="1594.500" y="275" width="275" height=".8" fill="#666"/>
<path d="M1847.500 275V607" stroke="#5e5e5e"/>
<path d="M1620.500 291V377M1621 340H1634M1621 358H1634M1621 377H1634" stroke="#333" fill="none"/>
<use href="#cminus" x="1602.500" y="282"/>
<circle cx="1621.500" cy="283" r="8" fill="#9c9c9c" opacity=".8"/><use href="#scene" x="1623" y="283"/>
<text x="1633" y="288.500" class="h">Scene</text>
<use href="#cplus" x="1625.500" y="302"/>
<use href="#rlay" x="1639.500" y="302"/>
<text x="1652.500" y="307.500" style="font-size:11px">RenderLayers</text>
<path d="M1730 298V309" stroke="#444" stroke-width="1.500"/>
<circle cx="1746.500" cy="302" r="8" fill="#999"/><use href="#rlay" x="1746" y="302"/>
<circle cx="1640" cy="322" r="8" fill="#9a9aa8"/><circle cx="1640" cy="322" r="6" fill="#4a8ab0" stroke="#222" stroke-width=".6"/><path d="M1636 320Q1640 317 1642 320L1640 325Q1637 325 1636 320z" fill="#5a9a50"/>
<text x="1652.500" y="326.500" class="h">World</text>
<use href="#cplus" x="1621.500" y="340"/>
<g transform="translate(1641 341)"><rect x="-6" y="-2" width="9" height="6" fill="#e89030" stroke="#222" stroke-width=".7"/><circle cx="-3.500" cy="-4" r="2.500" fill="#e89030" stroke="#222" stroke-width=".7"/><circle cx="1.500" cy="-4" r="2.500" fill="#e89030" stroke="#222" stroke-width=".7"/><path d="M3 0L7-2V5L3 3z" fill="#e89030" stroke="#222" stroke-width=".6"/></g>
<text x="1652.500" y="345.500" style="font-size:11px">Camera</text>
<path d="M1700.500 335V346" stroke="#444" stroke-width="1.500"/>
<circle cx="1718" cy="341" r="9" fill="#8e8e8e"/><g transform="translate(1718 341)" opacity=".7"><rect x="-6" y="-2" width="9" height="6" fill="#bbb" stroke="#444" stroke-width=".7"/><circle cx="-3.500" cy="-4" r="2.500" fill="#bbb" stroke="#444" stroke-width=".7"/><circle cx="1.500" cy="-4" r="2.500" fill="#bbb" stroke="#444" stroke-width=".7"/></g>
<use href="#cplus" x="1621.500" y="358"/>
<circle cx="1640" cy="360" r="8.500" fill="#a87a45"/><use href="#mesh" x="1640" y="360"/>
<text x="1652.500" y="364.500" style="fill:#e8e8e8;font-size:11px">Cube</text>
<path d="M1687.500 354V365" stroke="#444" stroke-width="1.500"/>
<path d="M1710 355Q1704 352 1704 358Q1709 360 1706 362L1699 363L1703 366" fill="none" stroke="#eee" stroke-width="1.400"/>
<path d="M1725 356H1731L1724 367 1718 356H1725z" fill="none" stroke="#555" stroke-width="1.600"/>
<use href="#cplus" x="1621.500" y="377"/>
<g transform="translate(1641 378)"><circle cy="-2" r="4.500" fill="#f0c070" stroke="#222" stroke-width=".7"/><rect x="-2" y="2" width="4" height="4" fill="#ddd" stroke="#222" stroke-width=".5"/></g>
<text x="1652.500" y="383.500" class="h">Lamp</text>
<path d="M1690 373V384" stroke="#444" stroke-width="1.500"/>
<g transform="translate(1708 379)"><circle r="3.500" fill="#aab0a0"/><path d="M-7-7h3M-7-7v3M7-7h-3M7-7v3M-7 7h3M-7 7v-3M7 7h-3M7 7v-3" stroke="#a8a890" stroke-width="1.300" fill="none"/></g>
<use href="#eye" x="1856" y="341"/><use href="#eye" x="1856" y="360"/><use href="#eye" x="1856" y="379"/>
<use href="#hb" x="1594.500" y="594"/>
<rect x="1594.500" y="607" width="275" height="1.500" fill="#111"/>

<!-- properties -->
<rect x="1594.500" y="608.500" width="275" height="26" fill="#6e6e6e"/>
<rect x="1594.500" y="634" width="275" height="336" fill="#727272"/>
<rect x="1594.500" y="633.500" width="275" height="1" fill="#8c8c8c"/>
<rect x="1603.500" y="612.500" width="28.500" height="18" rx="4" fill="url(#gd)" stroke="#222"/>
<rect x="1607" y="615" width="13" height="4.500" rx="2" fill="#eee" stroke="#111" stroke-width=".5"/><rect x="1607" y="622" width="13" height="4.500" rx="2" fill="#eee" stroke="#111" stroke-width=".5"/><use href="#ud" x="1626.500" y="621.500"/>
<rect x="1639" y="612.500" width="232" height="18" rx="3" fill="url(#gtab)" stroke="#222"/>
<path d="M1660.500 612V631M1681 612V631M1702 612V631M1723 612V631M1744 612V631M1765 612V631M1786 612V631M1807 612V631M1828 612V631M1849 612V631" stroke="#222"/>
<rect x="1639" y="612.500" width="21" height="18" rx="3" fill="#5680c2" stroke="#234"/>
<use href="#cam" x="1649.500" y="621"/>
<use href="#scene" x="1671" y="622"/>
<circle cx="1690" cy="622" r="6.500" fill="#4a80a8" stroke="#222" stroke-width=".6"/><path d="M1686 620Q1690 617 1693 620L1690 626Q1687 626 1686 620z" fill="#5a9a50"/>
<use href="#ccube" x="1711.500" y="622"/>
<path d="M1727 625L1732 620M1727 621a3 3 0 1 0 4 4l1-1M1737 619a3 3 0 1 0-4-4l-1 1" stroke="#aaa" fill="none" stroke-width="1.600"/>
<path d="M1748 627L1756 619M1758 613a3.500 3.500 0 0 0-2 6" stroke="#8ab0d8" fill="none" stroke-width="2.200"/>
<path d="M1769 616H1781L1775 627z" fill="none" stroke="#bbb" stroke-width="1.300"/><circle cx="1769" cy="616" r="1.300" fill="#eee"/><circle cx="1781" cy="616" r="1.300" fill="#eee"/><circle cx="1775" cy="627" r="1.300" fill="#eee"/>
<circle cx="1796.500" cy="622" r="6.500" fill="#666" stroke="#222" stroke-width=".5"/><path d="M1796.500 622V615.500A6.500 6.500 0 0 1 1803 622A6.500 6.500 0 0 1 1796.500 628.500z" fill="#9a7a70"/>
<rect x="1811" y="615" width="13" height="13" fill="#ddd" stroke="#222" stroke-width=".5"/><path d="M1811 615h3.250v3.250h-3.250zM1817.500 615h3.250v3.250h-3.250zM1814.250 618.250h3.250v3.250h-3.250zM1820.750 618.250h3.250v3.250h-3.250zM1811 621.500h3.250v3.250h-3.250zM1817.500 621.500h3.250v3.250h-3.250zM1814.250 624.750h3.250v3.250h-3.250zM1820.750 624.750h3.250v3.250h-3.250z" fill="#a03838"/>
<path d="M1838 614V624M1833 619H1843M1835 624V630M1832 627H1838M1844 622V628M1841 625H1847" stroke="#e8c888" stroke-width="1.100"/>
<path d="M1853 621L1859 628L1864 620L1859 624z" fill="#5680c2"/><circle cx="1866" cy="616" r="2.800" fill="#ddd" stroke="#222" stroke-width=".5"/>

<g transform="translate(1611 651)"><path d="M-6 6L-1 1" stroke="#ddd" stroke-width="1.600"/><path d="M-3-2L3 4 5 0 2-3 3-6-1-6z" fill="#ddd" stroke="#222" stroke-width=".8"/></g>
<use href="#scene" x="1634" y="652"/>
<text x="1641" y="655.500" class="n">Scene</text>
<path d="M1600 670.500H1869" stroke="#5a5a5a"/><path d="M1600 671.500H1869" stroke="#808080"/>
<path d="M1604.500 678H1612.500L1608.500 686z" fill="#222"/>
<text x="1619" y="687" style="font-size:12.500px">Render</text>
<rect x="1602.500" y="699.500" width="140.500" height="18.500" rx="5" fill="url(#gb)" stroke="#333"/>
<use href="#cam" x="1614.500" y="710"/><circle cx="1622" cy="703" r="2.500" fill="#f0d040"/>
<text x="1679.500" y="713" class="m">Image</text>
<rect x="1752.500" y="699.500" width="140" height="18.500" rx="5" fill="url(#gb)" stroke="#333"/>
<g transform="translate(1764 709)"><rect x="-7" y="-2" width="14" height="9" fill="#ddd" stroke="#111"/><path d="M-7-2L7-5V-8L-7-5z" fill="#333" stroke="#111" stroke-width=".5"/></g>
<text x="1831" y="713" class="m">Animation</text>
<text x="1607.500" y="737">Display:</text>
<rect x="1704.500" y="723.500" width="190" height="18.500" rx="4" fill="url(#gd)" stroke="#222"/>
<text x="1709" y="737" class="w n">Image Editor</text>
<path d="M1600 752.500H1869" stroke="#5a5a5a"/><path d="M1600 753.500H1869" stroke="#808080"/>
<path d="M1604 759V768L1612 763.500z" fill="#222"/>
<text x="1619" y="769" style="font-size:12.500px">Layers</text>
<path d="M1600 775.500H1869" stroke="#5a5a5a"/><path d="M1600 776.500H1869" stroke="#808080"/>
<path d="M1604.500 783H1612.500L1608.500 791z" fill="#222"/>
<text x="1619" y="792" style="font-size:12.500px">Dimensions</text>
<rect x="1602.500" y="804.500" width="254" height="18" rx="4" fill="url(#gd)" stroke="#222"/>
<text x="1607.500" y="818" class="w">Render Presets</text><use href="#ud" x="1848" y="813.500"/>
<rect x="1857" y="804.500" width="20" height="18" rx="4" fill="url(#gb)" stroke="#333"/><use href="#plus" x="1865" y="813.500"/>
<text x="1607.500" y="842">Resolution:</text><text x="1757.500" y="842" class="n">Frame Range:</text>
<!-- res group -->
<rect x="1602.500" y="847.500" width="140.500" height="56" rx="6" fill="url(#gn)" stroke="#333"/>
<rect x="1603" y="885.500" width="71" height="17.500" fill="#7e7e7e"/>
<path d="M1603 866H1743M1603 885H1743" stroke="#333"/>
<text x="1672.500" y="861.500" class="m">X: 1920</text><text x="1672.500" y="880.500" class="m">Y: 1080</text><text x="1672.500" y="899" class="m">50%</text>
<path d="M1612 853L1608 856.500L1612 860zM1732 853L1736 856.500L1732 860zM1612 872L1608 875.500L1612 879zM1732 872L1736 875.500L1732 879z" fill="#555"/>
<rect x="1752.500" y="847.500" width="140" height="56" rx="6" fill="url(#gn)" stroke="#333"/>
<path d="M1753 866H1892M1753 885H1892" stroke="#333"/>
<text x="1823" y="861.500" class="m" style="font-size:11.300px">Start Frame: 1</text><text x="1823" y="880.500" class="m" style="font-size:11px">End Frame: 250</text><text x="1823" y="899" class="m" style="font-size:11.300px">Frame Step: 1</text>
<path d="M1763 853L1759 856.500L1763 860zM1763 872L1759 875.500L1763 879zM1763 891L1759 894.500L1763 898z" fill="#555"/>
<text x="1607.500" y="918">Aspect Ratio:</text><text x="1757.500" y="918">Frame Rate:</text>
<rect x="1602.500" y="923.500" width="140.500" height="37" rx="6" fill="url(#gn)" stroke="#333"/>
<path d="M1603 942H1743" stroke="#333"/>
<text x="1672.500" y="937.500" class="m">X: 1.000</text><text x="1672.500" y="956" class="m">Y: 1.000</text>
<path d="M1612 929L1608 932.500L1612 936zM1732 929L1736 932.500L1732 936zM1612 948L1608 951.500L1612 955zM1732 948L1736 951.500L1732 955z" fill="#555"/>
<rect x="1752.500" y="923.500" width="140" height="18.500" rx="4" fill="url(#gd)" stroke="#222"/>
<text x="1757.500" y="937.500" class="w">24 fps</text>
<text x="1757.500" y="956" class="n">Time Remapping:</text>
<rect x="1752.500" y="962.500" width="140" height="18" rx="6" fill="url(#gn)" stroke="#333"/><path d="M1822.500 962V981" stroke="#333"/>
<text x="1787" y="975.500" class="m">Old: 100</text><text x="1850" y="975.500" class="m">New: 100</text>
<rect x="1605" y="966" width="12" height="12" rx="3" fill="#555" stroke="#333"/><text x="1624" y="975.500">Border</text>
<rect x="1680.500" y="966" width="12" height="12" rx="3" fill="#555" stroke="#333"/><text x="1699" y="975.500">Crop</text>

<!-- mouse pointer -->
<path d="M709.500 639V656L713.500 652L716.500 659L719.500 657.500L716.500 651L722 651z" fill="#111" stroke="#eee"/>
</svg>
</body></html>
